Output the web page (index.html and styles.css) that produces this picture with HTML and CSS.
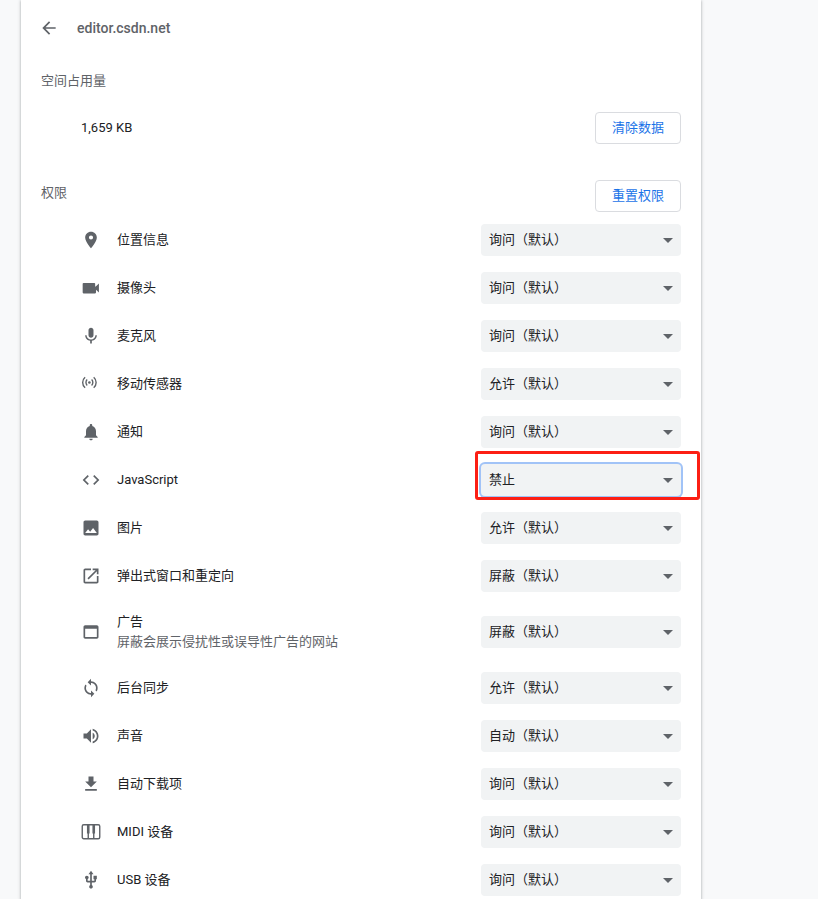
FILE: index.html
```html
<!DOCTYPE html>
<html lang="zh-CN">
  <head>
    <meta charset="UTF-8" />
    <meta name="viewport" content="width=device-width, initial-scale=1.0" />
    <title>editor.csdn.net</title>
    <link rel="stylesheet" href="styles.css">
  </head>
  <body>
    <main class="card">
      <header class="header">
        <svg class="back" viewBox="0 0 24 24"><path d="M20 11H7.83l5.59-5.59L12 4l-8 8 8 8 1.41-1.41L7.83 13H20v-2z"/></svg>
        <h1>editor.csdn.net</h1>
      </header>

      <h2 class="section-title usage-title">空间占用量</h2>
      <div class="usage">
        <span>1,659 KB</span>
        <button type="button">清除数据</button>
      </div>

      <div class="permissions-head">
        <h2 class="section-title">权限</h2>
        <button type="button">重置权限</button>
      </div>

      <div class="row">
        <svg class="icon" viewBox="0 0 24 24"><path d="M12 2C8.13 2 5 5.13 5 9c0 5.25 7 13 7 13s7-7.75 7-13c0-3.87-3.13-7-7-7zm0 9.5a2.5 2.5 0 0 1 0-5 2.5 2.5 0 0 1 0 5z"/></svg>
        <span class="label">位置信息</span>
        <div class="select"><span>询问（默认）</span></div>
      </div>
      <div class="row">
        <svg class="icon" viewBox="0 0 24 24"><path d="M17 10.5V7c0-.55-.45-1-1-1H3c-.55 0-1 .45-1 1v10.500c0 .55.45 1 1 1h14c.55 0 1-.45 1-1V14l3.500 3.500v-11L18 10z"/></svg>
        <span class="label">摄像头</span>
        <div class="select"><span>询问（默认）</span></div>
      </div>
      <div class="row">
        <svg class="icon" viewBox="0 0 24 24"><path d="M12 14c1.66 0 2.99-1.34 2.99-3L15 5c0-1.66-1.34-3-3-3S9 3.34 9 5v6c0 1.66 1.34 3 3 3zm5.3-3c0 3-2.54 5.1-5.3 5.1S6.7 14 6.7 11H5c0 3.41 2.72 6.23 6 6.72V21h2v-3.28c3.28-.48 6-3.3 6-6.72h-1.7z"/></svg>
        <span class="label">麦克风</span>
        <div class="select"><span>询问（默认）</span></div>
      </div>
      <div class="row">
        <svg class="icon line" viewBox="0 0 20 20">
          <circle class="dot" cx="8.4" cy="8.5" r="1.3"/>
          <path d="M6.2 5.6a4 4 0 0 0 0 5.8M10.6 5.6a4 4 0 0 1 0 5.8M4.1 3.2a7 7 0 0 0 0 10.6M12.7 3.2a7 7 0 0 1 0 10.6"/>
        </svg>
        <span class="label">移动传感器</span>
        <div class="select"><span>允许（默认）</span></div>
      </div>
      <div class="row">
        <svg class="icon" viewBox="0 0 24 24"><path d="M12 22c1.1 0 2-.9 2-2h-4c0 1.1.89 2 2 2zm6-6v-5c0-3.07-1.64-5.64-4.5-6.32V4c0-.83-.67-1.5-1.5-1.5s-1.5.67-1.5 1.5v.68C7.63 5.36 6 7.92 6 11v5l-2 2v1h16v-1l-2-2z"/></svg>
        <span class="label">通知</span>
        <div class="select"><span>询问（默认）</span></div>
      </div>
      <div class="row">
        <svg class="icon" viewBox="0 0 24 24"><path d="M9.4 16.6L4.8 12l4.6-4.6L8 6l-6 6 6 6 1.4-1.4zm5.2 0l4.6-4.6-4.6-4.6L16 6l6 6-6 6-1.4-1.4z"/></svg>
        <span class="label">JavaScript</span>
        <div class="select focused"><span>禁止</span><i class="marker"></i></div>
      </div>
      <div class="row">
        <svg class="icon" viewBox="0 0 24 24"><path d="M21 19V5c0-1.1-.9-2-2-2H5c-1.1 0-2 .9-2 2v14c0 1.1.9 2 2 2h14c1.1 0 2-.9 2-2zM8.5 13.5l2.5 3.01L14.5 12l4.5 6H5l3.5-4.5z"/></svg>
        <span class="label">图片</span>
        <div class="select"><span>允许（默认）</span></div>
      </div>
      <div class="row">
        <svg class="icon" viewBox="0 0 24 24"><path d="M19 19H5V5h7V3H5c-1.11 0-2 .9-2 2v14c0 1.1.89 2 2 2h14c1.1 0 2-.9 2-2v-7h-2v7zM14 3v2h3.59l-9.83 9.83 1.41 1.41L19 6.41V10h2V3h-7z"/></svg>
        <span class="label">弹出式窗口和重定向</span>
        <div class="select"><span>屏蔽（默认）</span></div>
      </div>
      <div class="row tall">
        <svg class="icon" viewBox="0 0 24 24"><path d="M19 4H5c-1.11 0-2 .9-2 2v12c0 1.1.89 2 2 2h14c1.1 0 2-.9 2-2V6c0-1.1-.9-2-2-2zm0 14H5V8h14v10z"/></svg>
        <span class="label">广告<small>屏蔽会展示侵扰性或误导性广告的网站</small></span>
        <div class="select"><span>屏蔽（默认）</span></div>
      </div>
      <div class="row">
        <svg class="icon" viewBox="0 0 24 24"><path d="M12 4V1L8 5l4 4V6c3.31 0 6 2.69 6 6 0 1.01-.25 1.97-.7 2.8l1.46 1.46C19.54 15.03 20 13.57 20 12c0-4.42-3.58-8-8-8zm0 14c-3.31 0-6-2.69-6-6 0-1.01.25-1.97.7-2.8L5.24 7.74C4.46 8.97 4 10.43 4 12c0 4.42 3.58 8 8 8v3l4-4-4-4v3z"/></svg>
        <span class="label">后台同步</span>
        <div class="select"><span>允许（默认）</span></div>
      </div>
      <div class="row">
        <svg class="icon" viewBox="0 0 24 24"><path d="M3 9v6h4l5 5V4L7 9H3zm13.5 3c0-1.77-1.02-3.29-2.5-4.03v8.05c1.48-.73 2.5-2.25 2.5-4.02zM14 3.23v2.06c2.89.86 5 3.54 5 6.71s-2.11 5.85-5 6.71v2.06c4.01-.91 7-4.49 7-8.77s-2.99-7.86-7-8.77z"/></svg>
        <span class="label">声音</span>
        <div class="select"><span>自动（默认）</span></div>
      </div>
      <div class="row">
        <svg class="icon" viewBox="0 0 24 24"><path d="M19 9h-4V3H9v6H5l7 7 7-7zM5 18v2h14v-2H5z"/></svg>
        <span class="label">自动下载项</span>
        <div class="select"><span>询问（默认）</span></div>
      </div>
      <div class="row">
        <svg class="icon line" viewBox="0 0 20 20">
          <rect x="1.25" y="2.75" width="17.5" height="14" rx="1.5"/>
          <path d="M7.25 11v5.5M12.75 11v5.5"/>
          <path class="keys" d="M7.25 3v8.5M12.75 3v8.5"/>
        </svg>
        <span class="label">MIDI 设备</span>
        <div class="select"><span>询问（默认）</span></div>
      </div>
      <div class="row">
        <svg class="icon" viewBox="0 0 24 24"><path d="M15 7v4h1v2h-3V5h2l-3-4-3 4h2v8H8v-2.07c.7-.37 1.2-1.08 1.2-1.93 0-1.21-.99-2.2-2.2-2.2-1.21 0-2.2.99-2.2 2.2 0 .85.5 1.56 1.2 1.93V13c0 1.11.89 2 2 2h3v3.05c-.71.37-1.2 1.1-1.2 1.95 0 1.22.99 2.2 2.2 2.2 1.21 0 2.2-.98 2.2-2.2 0-.85-.49-1.58-1.2-1.95V15h3c1.11 0 2-.89 2-2v-2h1V7h-4z"/></svg>
        <span class="label">USB 设备</span>
        <div class="select"><span>询问（默认）</span></div>
      </div>
    </main>
  </body>
</html>
```
FILE: styles.css
```css
* {
  box-sizing: border-box;
}
body {
  margin: 0;
  height: 899px;
  overflow: hidden;
  background: #f8f9fa;
  color: #202124;
  font: 13px/20px Roboto, "Noto Sans CJK SC", sans-serif;
}
.card {
  width: 680px;
  height: 899px;
  margin-left: 21px;
  padding: 0 20px;
  overflow: hidden;
  background: #fff;
  box-shadow: 0 1px 2px rgba(60, 64, 67, 0.3), 0 1px 3px 1px rgba(60, 64, 67, 0.15);
}
svg {
  flex: none;
  fill: #5f6368;
}
.header {
  display: flex;
  align-items: center;
  height: 56px;
}
.back {
  width: 20px;
  height: 20px;
  margin: 0 18px 0 -2px;
}
h1 {
  margin: 0;
  color: #5f6368;
  font-size: 14px;
  font-weight: 500;
}
.section-title {
  margin: 0;
  color: #5f6368;
  font-size: 13px;
  font-weight: 400;
}
.usage-title {
  padding-top: 15px;
}
.usage,
.permissions-head {
  display: flex;
  align-items: center;
  justify-content: space-between;
}
.usage {
  height: 73px;
  padding-left: 40px;
}
.permissions-head {
  height: 40px;
  margin-top: 12px;
}
.permissions-head .section-title {
  padding-bottom: 6px;
}
button {
  width: 86px;
  height: 32px;
  padding: 0;
  border: 1px solid #dadce0;
  border-radius: 4px;
  background: #fff;
  color: #1a73e8;
  font: inherit;
}
.row {
  display: flex;
  align-items: center;
  height: 48px;
  padding-left: 40px;
}
.tall {
  height: 64px;
}
.icon {
  width: 20px;
  height: 20px;
  margin-right: 16px;
}
.line {
  fill: none;
  stroke: #5f6368;
  stroke-width: 1.4;
}
.dot {
  fill: #5f6368;
  stroke: none;
}
.keys {
  stroke-width: 2.6;
}
.label {
  flex: 1;
  padding-bottom: 1px;
}
.label small {
  display: block;
  color: #5f6368;
  font-size: 13px;
}
.select {
  position: relative;
  display: flex;
  align-items: center;
  justify-content: space-between;
  width: 200px;
  height: 32px;
  padding: 0 8px;
  border-radius: 4px;
  background: #f1f3f4;
}
.select::after {
  content: "";
  border: 5px solid transparent;
  border-top-color: #5f6368;
  border-bottom: 0;
}
.focused {
  box-shadow: 0 0 0 2px #a1c3f7;
}
/* red frame around the changed setting */
.marker {
  position: absolute;
  top: -13px;
  left: -6px;
  width: 225px;
  height: 49px;
  border: 3px solid #fc1f14;
  border-radius: 3px;
}
```
